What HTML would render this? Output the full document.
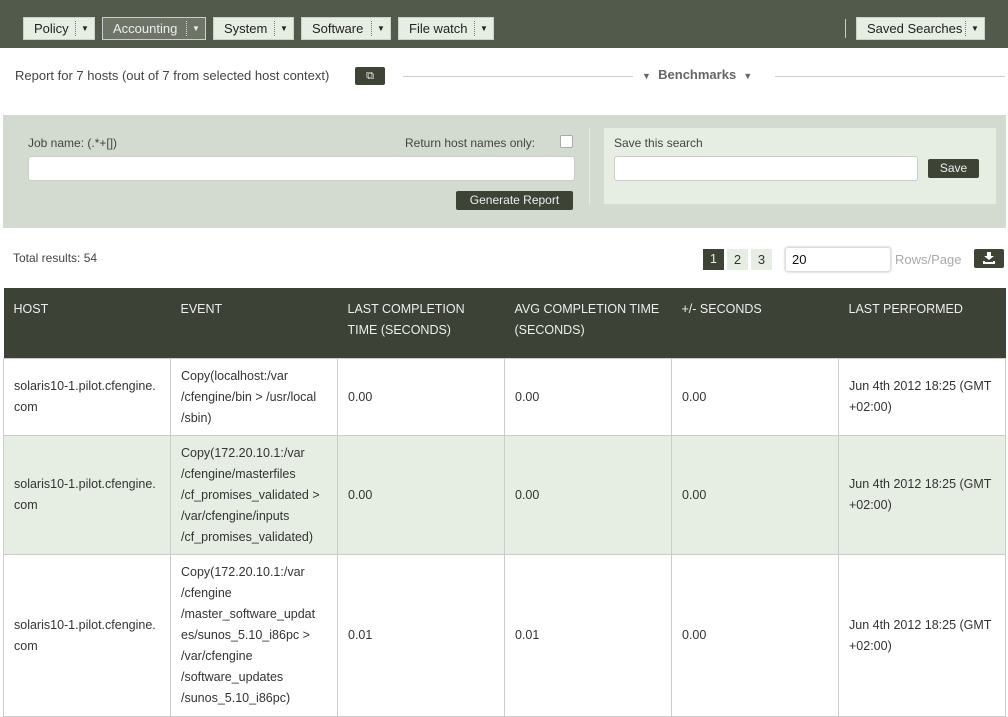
<!DOCTYPE html>
<html><head><style>
body{margin:0;width:1008px;height:708px;overflow:hidden;font-family:"Liberation Sans",sans-serif;font-size:13px;color:#333;background:#fff;position:relative}
.top{position:absolute;left:0;top:0;width:1008px;height:48px;background:#525a4c}
.mb{position:absolute;top:17px;height:23px;background:#e6ede3;border:1px solid #c9d0c5;box-sizing:border-box;font-size:13px;line-height:21px;padding-left:10px;color:#222}
.mb .ar{position:absolute;right:0;top:3px;width:18px;height:15px;border-left:1px dotted #777;font-size:8px;line-height:15px;text-align:center}
.mb.act{background:#6e7568;color:#eee;border-color:#ccc}
.mb.act .ar{border-color:#ddd}
.abs{position:absolute}
.btn{position:absolute;background:#3d4436;color:#eee;font-size:12px;text-align:center;border-radius:2px}
input.f{position:absolute;border:1px solid #ccc;background:#fff;box-sizing:border-box;border-radius:3px}
table{position:absolute;left:3px;top:288px;border-collapse:collapse;width:1003px}
th{background:#3c4236;color:#eee;font-weight:normal;text-align:left;vertical-align:top;font-size:12.5px;line-height:21px;padding:11px 10px 0;height:59px;width:147px}
td{border:1px solid #ccc;vertical-align:middle;padding:0 10px;line-height:21px;font-size:12.5px}
tr.a td{background:#e6ede3}
</style></head><body>
<div class="top"></div>
<div class="mb" style="left:23px;width:72px">Policy<span class="ar">▼</span></div>
<div class="mb act" style="left:102px;width:104px">Accounting<span class="ar">▼</span></div>
<div class="mb" style="left:213px;width:81px">System<span class="ar">▼</span></div>
<div class="mb" style="left:301px;width:90px">Software<span class="ar">▼</span></div>
<div class="mb" style="left:398px;width:96px">File watch<span class="ar">▼</span></div>
<div class="abs" style="left:845px;top:19px;width:1px;height:19px;background:#ccc"></div>
<div class="mb" style="left:856px;width:129px">Saved Searches<span class="ar">▼</span></div>

<div class="abs" style="left:15px;top:68px;color:#444">Report for 7 hosts (out of 7 from selected host context)</div>
<div class="btn" style="left:355px;top:67px;width:30px;height:18px;font-size:11px;line-height:18px">⧉</div>
<div class="abs" style="left:403px;top:76px;width:230px;height:1px;background:#ccc"></div>
<div class="abs" style="left:642px;top:67px;color:#666;font-weight:bold;font-size:13px"><span style="font-size:9px">▼</span> &nbsp;Benchmarks&nbsp; <span style="font-size:9px">▼</span></div>
<div class="abs" style="left:775px;top:76px;width:230px;height:1px;background:#ccc"></div>

<div class="abs" style="left:3px;top:115px;width:1003px;height:113px;background:#d3dbd0"></div>
<div class="abs" style="left:28px;top:136px;font-size:12px;color:#444">Job name: (.*+[])</div>
<div class="abs" style="left:405px;top:136px;font-size:12px;color:#444">Return host names only:</div>
<div class="abs" style="left:560px;top:135px;width:11px;height:11px;background:#fff;border:1px solid #aaa;border-radius:2px"></div>
<input class="f" style="left:28px;top:156px;width:547px;height:25px">
<div class="btn" style="left:456px;top:191px;width:117px;height:19px;line-height:19px">Generate Report</div>
<div class="abs" style="left:589px;top:128px;width:1px;height:76px;background:#e6ede3"></div>
<div class="abs" style="left:604px;top:128px;width:392px;height:76px;background:#e6ede3"></div>
<div class="abs" style="left:614px;top:136px;font-size:12px;color:#444">Save this search</div>
<input class="f" style="left:614px;top:156px;width:304px;height:25px">
<div class="btn" style="left:928px;top:159px;width:51px;height:19px;line-height:19px">Save</div>

<div class="abs" style="left:13px;top:251px;font-size:12px;color:#444">Total results: 54</div>
<div class="btn" style="left:703px;top:249px;width:21px;height:21px;line-height:21px;font-size:12.5px;border-radius:0">1</div>
<div class="abs" style="left:727px;top:249px;width:21px;height:21px;line-height:21px;text-align:center;background:#e6ede3">2</div>
<div class="abs" style="left:751px;top:249px;width:21px;height:21px;line-height:21px;text-align:center;background:#e6ede3">3</div>
<div class="abs" style="left:785px;top:247px;width:106px;height:25px;border:1px solid #ddd;box-sizing:border-box;border-radius:3px;box-shadow:0 0 2px #bbb;padding:4px 6px;color:#111">20</div>
<div class="abs" style="left:895px;top:252px;color:#aaa">Rows/Page</div>
<div class="btn" style="left:974px;top:249px;width:30px;height:19px;line-height:19px">
<svg width="14" height="12" viewBox="0 0 14 12" style="margin-top:3px"><path d="M5 0h4v4h3L7 8 2 4h3z M1 9h2v1h8V9h2v3H1z" fill="#fff"/></svg></div>

<table>
<tr><th>HOST</th><th>EVENT</th><th>LAST COMPLETION TIME (SECONDS)</th><th>AVG COMPLETION TIME (SECONDS)</th><th>+/- SECONDS</th><th>LAST PERFORMED</th></tr>
<tr style="height:77px"><td>solaris10-1.pilot.cfengine.<br>com</td><td>Copy(localhost:/var<br>/cfengine/bin &gt; /usr/local<br>/sbin)</td><td>0.00</td><td>0.00</td><td>0.00</td><td>Jun 4th 2012 18:25 (GMT<br>+02:00)</td></tr>
<tr class="a" style="height:119px"><td>solaris10-1.pilot.cfengine.<br>com</td><td>Copy(172.20.10.1:/var<br>/cfengine/masterfiles<br>/cf_promises_validated &gt;<br>/var/cfengine/inputs<br>/cf_promises_validated)</td><td>0.00</td><td>0.00</td><td>0.00</td><td>Jun 4th 2012 18:25 (GMT<br>+02:00)</td></tr>
<tr style="height:162px"><td>solaris10-1.pilot.cfengine.<br>com</td><td>Copy(172.20.10.1:/var<br>/cfengine<br>/master_software_updat<br>es/sunos_5.10_i86pc &gt;<br>/var/cfengine<br>/software_updates<br>/sunos_5.10_i86pc)</td><td>0.01</td><td>0.01</td><td>0.00</td><td>Jun 4th 2012 18:25 (GMT<br>+02:00)</td></tr>
</table>
</body></html>
